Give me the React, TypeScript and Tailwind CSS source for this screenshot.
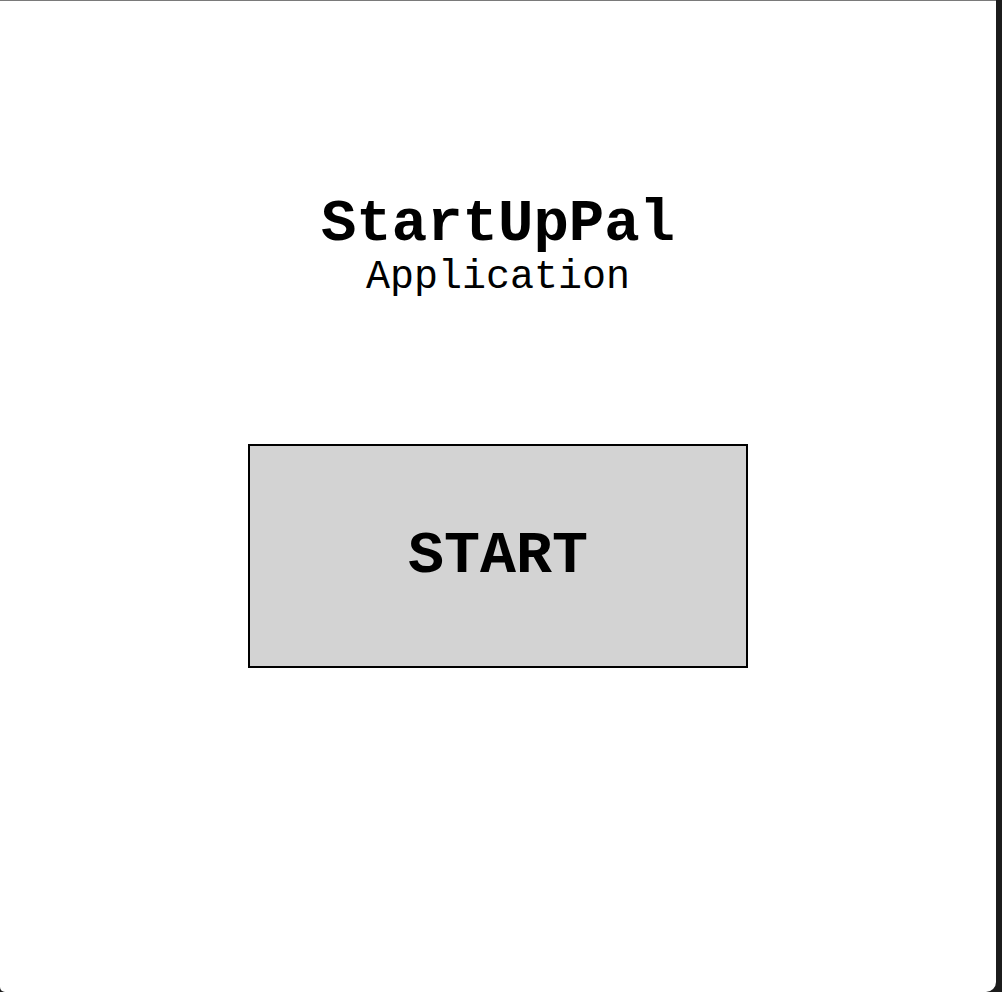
export default function App() {
  return (
    <div className="flex h-[992px] w-[1002px] bg-[#1c1c1c]">
      <main className="mr-[6px] flex flex-1 flex-col items-center rounded-bl-[5px] rounded-br-[10px] border-t border-[#7a7a7a] bg-white pt-[194px] font-['Courier_New',_'Liberation_Mono',_monospace] text-black">
        <h1 className="text-[59px] font-bold leading-none">StartUpPal</h1>
        <p className="mt-[4px] text-[40px] leading-none">Application</p>
        <button
          type="button"
          className="mt-[146px] flex h-[224px] w-[500px] items-center justify-center border-2 border-black bg-[#d3d3d3] text-[60px] font-bold leading-none"
        >
          START
        </button>
      </main>
    </div>
  );
}
